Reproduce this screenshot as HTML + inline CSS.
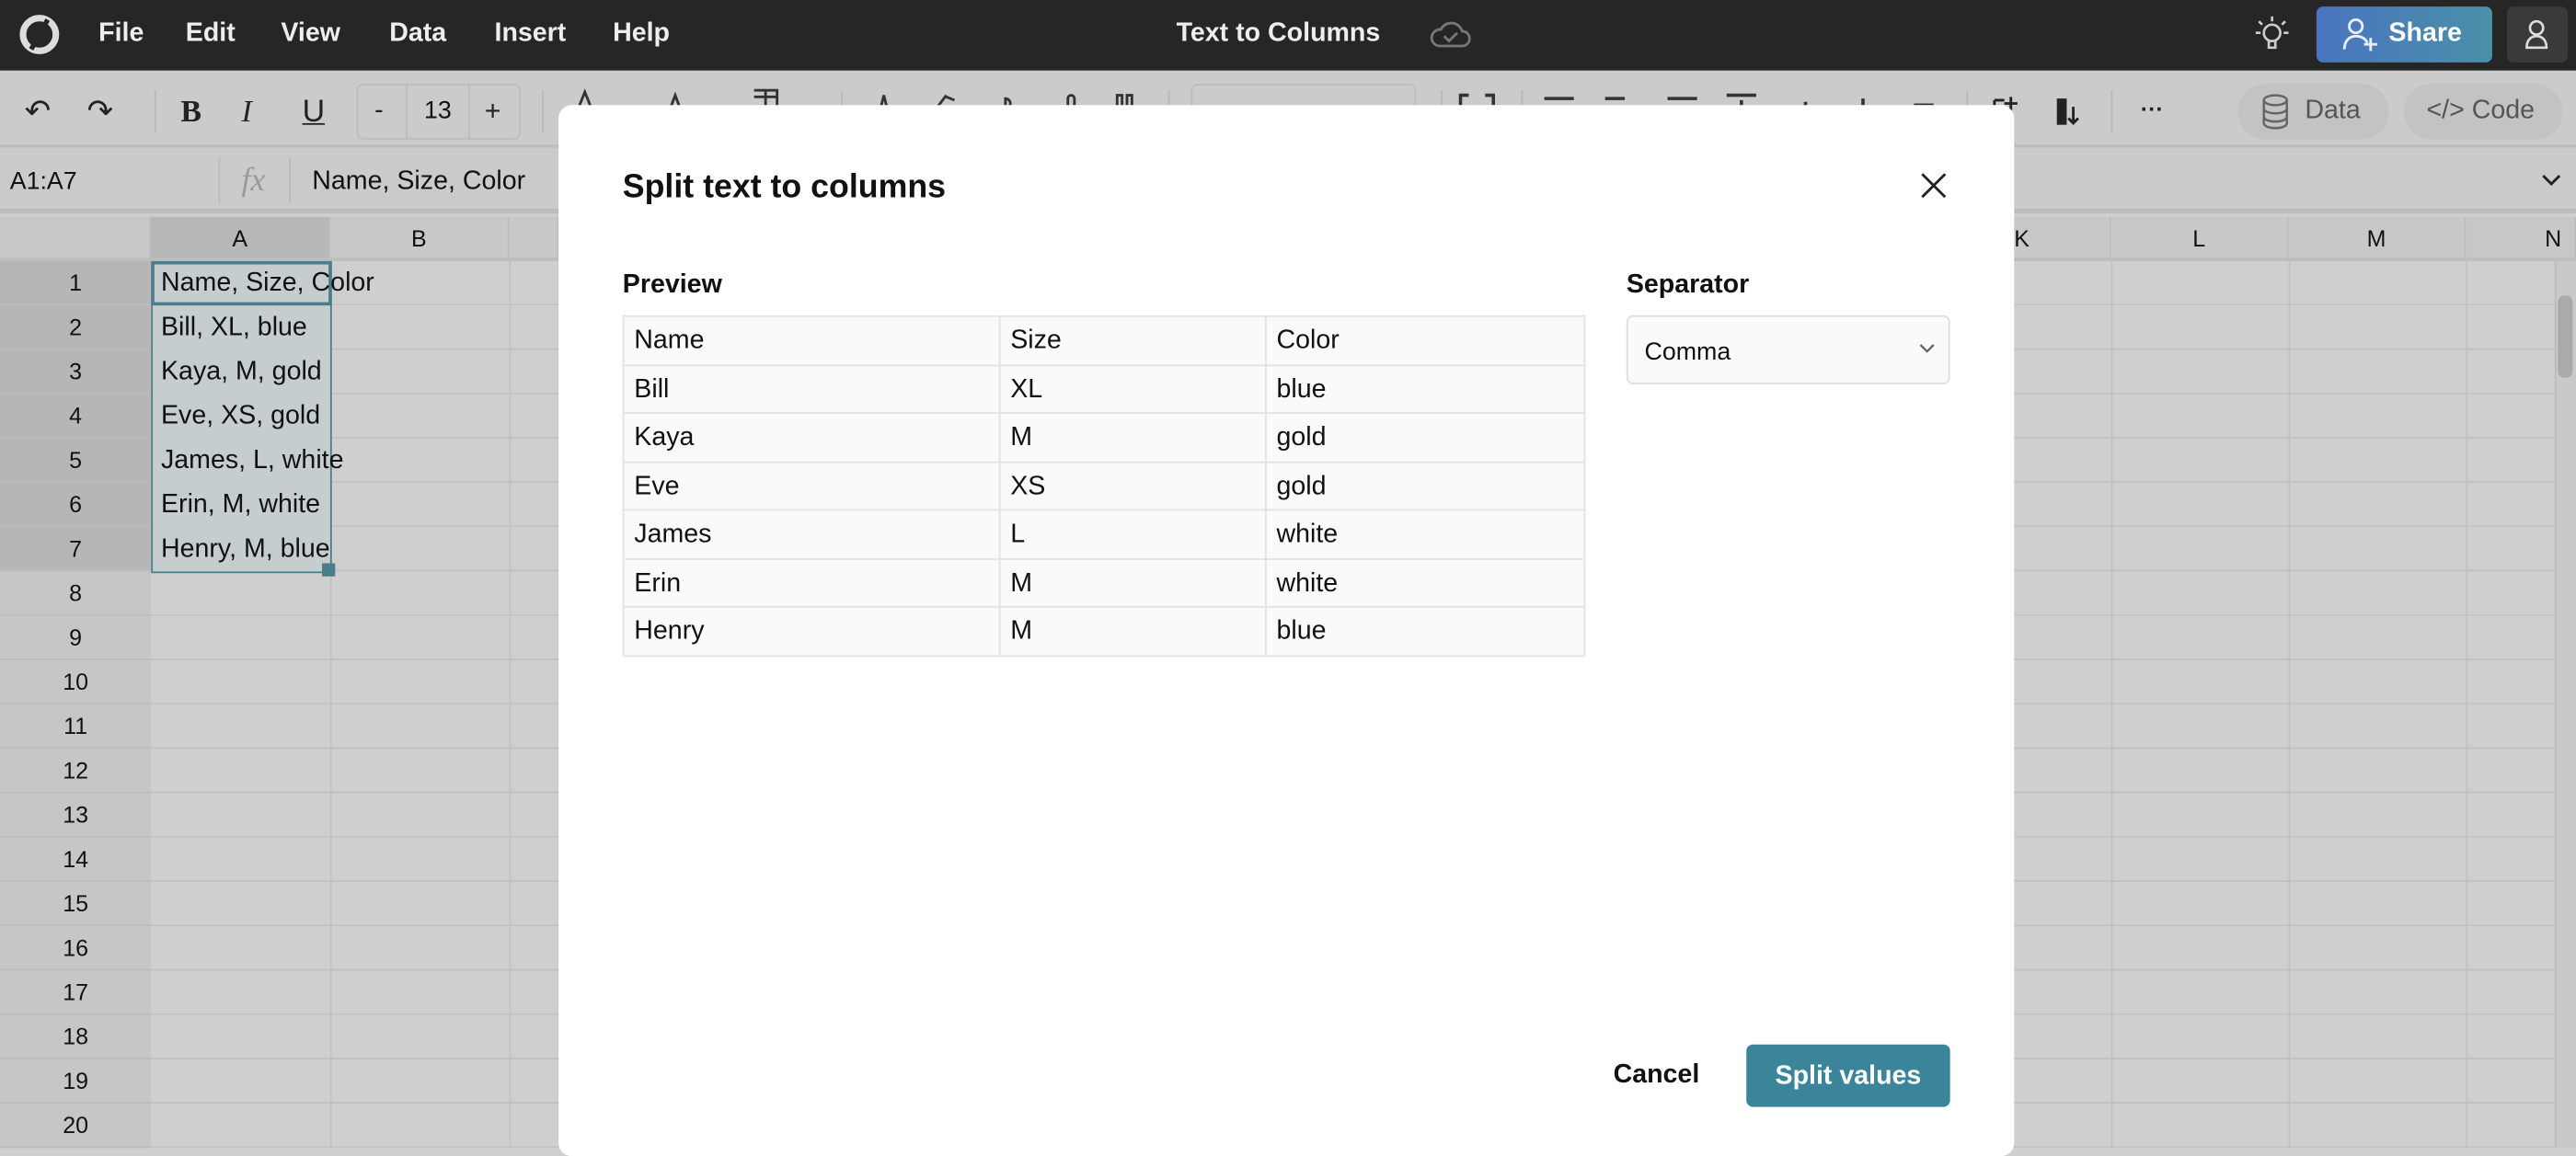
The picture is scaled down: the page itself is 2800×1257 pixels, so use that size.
<!DOCTYPE html>
<html><head><meta charset="utf-8">
<style>
*{box-sizing:border-box;margin:0;padding:0}
html,body{width:2800px;height:1242px;overflow:hidden;background:#cfcfcf}
#s{position:absolute;left:0;top:0;width:1568px;height:696px;transform:scale(1.785714);transform-origin:0 0;font-family:"Liberation Sans",sans-serif;color:#111}
.a{position:absolute}
.top{left:0;top:0;width:1568px;height:43px;background:#262626}
.menu{top:12px;color:#eee;font-size:16px;font-weight:bold}
.tb{left:0;top:43px;width:1568px;height:47px;background:#cbcbcb;border-bottom:2px solid #bdbdbd}
.ic{top:56px;font-size:19px;color:#222}
.sep{top:55px;width:1px;height:26px;background:#b8b8b8}
.fb{left:0;top:90px;width:1568px;height:40px;background:#cbcbcb;border-bottom:3px solid #bcbcbc}
.gl{font-size:15px;color:#111}
.hd{top:132px;height:27px;background:#c8c8c8;border-bottom:2px solid #bdbdbd;font-size:14px;text-align:center;line-height:26px;border-right:1px solid #bcbcbc}
.rh{left:0;width:92px;height:27px;background:#c6c6c6;border-bottom:1px solid #bcbcbc;font-size:14px;text-align:center;line-height:27px}
.modal{left:340px;top:64px;width:886px;height:640px;background:#fff;border-radius:8px}
table{border-collapse:collapse;position:absolute;left:39px;top:128px;width:586px;font-size:16px}
td{border:1px solid #e2e2e2;background:#fafafa;height:29.5px;padding:2px 6px 0;color:#111}
</style></head><body><div id="s">
<div class="a top"></div>
<svg class="a" style="left:11px;top:8px" width="26" height="26" viewBox="0 0 26 26"><circle cx="13" cy="13" r="10" fill="none" stroke="#ddd" stroke-width="4"/><path d="M8 22 L18 4" stroke="#262626" stroke-width="3"/></svg>
<div class="a menu" style="left:60px">File</div><div class="a menu" style="left:113px">Edit</div><div class="a menu" style="left:171px">View</div><div class="a menu" style="left:237px">Data</div><div class="a menu" style="left:301px">Insert</div><div class="a menu" style="left:373px">Help</div>
<div class="a menu" style="left:716px">Text to Columns</div>
<svg class="a" style="left:870px;top:11px" width="26" height="20" viewBox="0 0 26 20"><path d="M6 17h14a4.5 4.5 0 0 0 0-9a7 7 0 0 0-13-1a5 5 0 0 0-1 10z" fill="none" stroke="#777" stroke-width="1.6"/><path d="M9 11l3 3 5-5" fill="none" stroke="#777" stroke-width="1.6"/></svg>
<svg class="a" style="left:1372px;top:9px" width="22" height="24" viewBox="0 0 22 24"><circle cx="11" cy="11" r="5" fill="none" stroke="#ccc" stroke-width="1.5"/><path d="M9 16v4h4v-4M11 1v3M3 4l2 2M19 4l-2 2M1 11h3M18 11h3" stroke="#ccc" stroke-width="1.5" fill="none"/></svg>
<div class="a" style="left:1410px;top:4px;width:107px;height:34px;border-radius:4px;background:linear-gradient(90deg,#4a74c0,#4a90a8)"></div>
<svg class="a" style="left:1425px;top:10px" width="24" height="22" viewBox="0 0 24 22"><circle cx="9" cy="6" r="4" fill="none" stroke="#e8eef8" stroke-width="1.6"/><path d="M2 20c0-5 3-8 7-8s6 2 7 4M18 13v8M14 17h8" fill="none" stroke="#e8eef8" stroke-width="1.6"/></svg>
<div class="a" style="left:1454px;top:12px;color:#fff;font-weight:bold;font-size:16px">Share</div>
<div class="a" style="left:1526px;top:4px;width:37px;height:34px;border-radius:4px;background:#3a3a3a"></div>
<svg class="a" style="left:1536px;top:11px" width="16" height="20" viewBox="0 0 16 20"><circle cx="8" cy="6" r="4" fill="none" stroke="#ddd" stroke-width="1.5"/><path d="M2 18c0-5 3-7 6-7s6 2 6 7z" fill="none" stroke="#ddd" stroke-width="1.5"/></svg>
<div class="a tb"></div>
<div class="a ic" style="left:15px;top:57px">↶</div><div class="a ic" style="left:53px;top:57px">↷</div>
<div class="a sep" style="left:94px"></div>
<div class="a ic" style="left:110px;top:58px;font-weight:bold;font-family:'Liberation Serif',serif">B</div>
<div class="a ic" style="left:147px;top:58px;font-style:italic;font-family:'Liberation Serif',serif">I</div>
<div class="a ic" style="left:184px;top:58px;text-decoration:underline">U</div>
<div class="a" style="left:217px;top:51px;width:100px;height:34px;border:1px solid #bcbcbc;border-radius:4px"></div>
<div class="a" style="left:247px;top:51px;width:39px;height:34px;border-left:1px solid #bcbcbc;border-right:1px solid #bcbcbc;text-align:center;line-height:34px;font-size:15px">13</div>
<div class="a ic" style="left:228px;font-size:16px;top:59px">-</div><div class="a ic" style="left:295px;font-size:17px;top:58px">+</div>
<div class="a sep" style="left:330px"></div>
<svg class="a" style="left:340px;top:54px" width="360" height="12" viewBox="0 0 360 12"><path d="M12 12l4-10 4 10M68 12l3-8 3 8M119 1h14v11M119 5h14M126 1v11M196 12l2-8 2 8M230 12l6-8M236 5l5 2M272 6a3 3 0 1 1 0 6z M310 12v-6a2 2 0 0 1 4 0v6M340 12v-8h3v8M346 12v-8h3v8" stroke="#333" stroke-width="1.6" fill="none"/></svg>
<div class="a sep" style="left:512px"></div><div class="a sep" style="left:711px"></div>
<div class="a" style="left:725px;top:51px;width:137px;height:34px;border:1px solid #bcbcbc;border-radius:4px"></div>
<div class="a sep" style="left:877px"></div><div class="a sep" style="left:926px"></div><div class="a sep" style="left:1197px"></div><div class="a sep" style="left:1285px"></div>
<svg class="a" style="left:887px;top:56px" width="300" height="10" viewBox="0 0 300 10"><path d="M2 8V2h5M17 2h5v6M53 4h18M90 4h12M128 4h18M164 2h18M173 5v5M212 6v4M247 4v6M278 8h12" stroke="#333" stroke-width="2" fill="none"/></svg>
<svg class="a" style="left:1212px;top:57px" width="60" height="22" viewBox="0 0 60 22"><path d="M2 4h6M2 4v12h5M12 2v8M8 6h8M10 14v6" stroke="#222" stroke-width="1.6" fill="none"/><rect x="40" y="3" width="6" height="16" fill="#222"/><path d="M50 8v10M47 15l3 3 3-3" stroke="#222" stroke-width="1.6" fill="none"/></svg>
<div class="a ic" style="left:1303px;font-size:14px;font-weight:bold;top:58px">···</div>
<div class="a" style="left:1362px;top:51px;width:92px;height:34px;border-radius:17px;background:#c3c3c3"></div>
<svg class="a" style="left:1376px;top:57px" width="18" height="22" viewBox="0 0 18 22"><ellipse cx="9" cy="4" rx="7" ry="3" fill="none" stroke="#666" stroke-width="1.4"/><path d="M2 4v14c0 4 14 4 14 0V4M2 9c0 4 14 4 14 0M2 14c0 4 14 4 14 0" fill="none" stroke="#666" stroke-width="1.4"/></svg>
<div class="a" style="left:1403px;top:59px;font-size:16px;color:#555">Data</div>
<div class="a" style="left:1463px;top:51px;width:97px;height:34px;border-radius:17px;background:#c3c3c3"></div>
<div class="a" style="left:1477px;top:59px;font-size:16px;color:#555">&lt;/&gt; Code</div>
<div class="a fb"></div>
<div class="a gl" style="left:6px;top:102px">A1:A7</div>
<div class="a" style="left:133px;top:96px;width:1px;height:28px;background:#b8b8b8"></div>
<div class="a" style="left:147px;top:99px;font-size:20px;color:#999;font-style:italic;font-family:'Liberation Serif',serif">fx</div>
<div class="a" style="left:176px;top:96px;width:1px;height:28px;background:#b8b8b8"></div>
<div class="a" style="left:190px;top:102px;font-size:16px">Name, Size, Color</div>
<svg class="a" style="left:1547px;top:106px" width="12" height="8" viewBox="0 0 12 8"><path d="M1 1l5 5 5-5" stroke="#222" stroke-width="1.6" fill="none"/></svg>
<div class="a hd" style="left:0;width:92px"></div>
<div class="a hd" style="left:92px;width:109px;background:#b7b7b7">A</div>
<div class="a hd" style="left:201px;width:109px">B</div>
<div class="a hd" style="left:310px;width:30px"></div>
<div class="a hd" style="left:1176px;width:109px;text-align:left;padding-left:50px">K</div>
<div class="a hd" style="left:1285px;width:108px">L</div>
<div class="a hd" style="left:1393px;width:108px">M</div>
<div class="a hd" style="left:1501px;width:67px;text-align:left;padding-left:48px">N</div>
<div class="a" style="left:0;top:159px;width:1555px;height:540px;background:repeating-linear-gradient(#cfcfcf 0 26px,#c1c1c1 26px 27px)"></div>
<div class="a" style="left:201px;top:159px;width:1px;height:540px;background:#c1c1c1"></div>
<div class="a" style="left:310px;top:159px;width:1px;height:540px;background:#c1c1c1"></div>
<div class="a" style="left:1285px;top:159px;width:1px;height:540px;background:#c1c1c1"></div>
<div class="a" style="left:1393px;top:159px;width:1px;height:540px;background:#c1c1c1"></div>
<div class="a" style="left:1501px;top:159px;width:1px;height:540px;background:#c1c1c1"></div>
<div class="a" style="left:1555px;top:159px;width:13px;height:540px;background:#c9c9c9;border-left:1px solid #bbb"></div>
<div class="a" style="left:1557px;top:180px;width:9px;height:50px;background:#aaa;border-radius:4px"></div>
<div class="a" style="left:0;top:159px">
<div class="rh" style="background:#b6b6b6">1</div><div class="rh" style="background:#b6b6b6">2</div><div class="rh" style="background:#b6b6b6">3</div><div class="rh" style="background:#b6b6b6">4</div><div class="rh" style="background:#b6b6b6">5</div><div class="rh" style="background:#b6b6b6">6</div><div class="rh" style="background:#b6b6b6">7</div><div class="rh">8</div><div class="rh">9</div><div class="rh">10</div><div class="rh">11</div><div class="rh">12</div><div class="rh">13</div><div class="rh">14</div><div class="rh">15</div><div class="rh">16</div><div class="rh">17</div><div class="rh">18</div><div class="rh">19</div><div class="rh">20</div></div>
<div class="a" style="left:92px;top:159px;width:110px;height:190px;background:#c6cdcf;border:1.5px solid #4b7d8c"></div>
<div class="a" style="left:92px;top:159px;width:110px;height:27px;border:2.5px solid #4b7d8c"></div>
<div class="a" style="left:196px;top:343px;width:8px;height:8px;background:#4b7d8c"></div>
<div class="a" style="left:98px;top:159px;font-size:16px;line-height:27px">Name, Size, Color<br>Bill, XL, blue<br>Kaya, M, gold<br>Eve, XS, gold<br>James, L, white<br>Erin, M, white<br>Henry, M, blue</div>
<div class="a modal">
<div class="a" style="left:39px;top:39px;font-size:20px;font-weight:bold">Split text to columns</div>
<svg class="a" style="left:829px;top:41px" width="16" height="16" viewBox="0 0 16 16"><path d="M1 1L15 15M15 1L1 15" stroke="#222" stroke-width="1.6"/></svg>
<div class="a" style="left:39px;top:101px;font-size:16px;font-weight:bold">Preview</div>
<table><tr><td style="width:229px">Name</td><td style="width:162px">Size</td><td>Color</td></tr><tr><td>Bill</td><td>XL</td><td>blue</td></tr><tr><td>Kaya</td><td>M</td><td>gold</td></tr><tr><td>Eve</td><td>XS</td><td>gold</td></tr><tr><td>James</td><td>L</td><td>white</td></tr><tr><td>Erin</td><td>M</td><td>white</td></tr><tr><td>Henry</td><td>M</td><td>blue</td></tr></table>
<div class="a" style="left:650px;top:101px;font-size:16px;font-weight:bold">Separator</div>
<div class="a" style="left:650px;top:128px;width:197px;height:42px;border:1px solid #ddd;border-radius:4px;background:#fafafa;font-size:15px;padding:13px 10px">Comma</div>
<svg class="a" style="left:828px;top:145px" width="10" height="7" viewBox="0 0 10 7"><path d="M1 1l4 4 4-4" stroke="#666" fill="none" stroke-width="1.3"/></svg>
<div class="a" style="left:642px;top:582px;font-size:16px;font-weight:bold">Cancel</div>
<div class="a" style="left:723px;top:572px;width:124px;height:38px;border-radius:4px;background:#3a8599;color:#fff;font-size:16px;font-weight:bold;text-align:center;line-height:39px">Split values</div>
</div>
</div></body></html>
